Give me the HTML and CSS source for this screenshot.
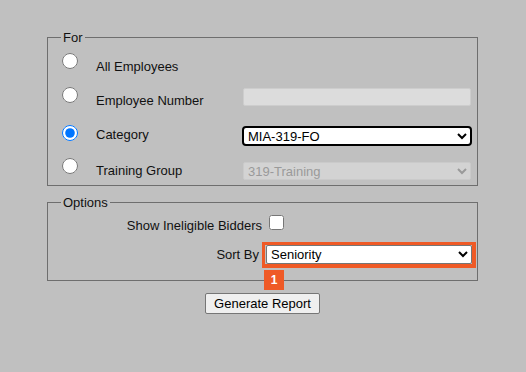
FILE: index.html
```html
<!DOCTYPE html>
<html lang="en">
<head>
    <meta charset="UTF-8">
    <meta name="viewport" content="width=device-width, initial-scale=1.0">
    <title>Bid Report</title>
    <link rel="stylesheet" href="styles.css">
</head>
<body>
    <form class="report">
        <fieldset class="group group-for">
            <legend>For</legend>
            <div class="for-row">
                <input type="radio" name="scope" class="radio">
                <span class="label">All Employees</span>
                <span></span>
            </div>
            <div class="for-row">
                <input type="radio" name="scope" class="radio">
                <span class="label">Employee Number</span>
                <input type="text" class="field" disabled>
            </div>
            <div class="for-row">
                <input type="radio" name="scope" class="radio" checked>
                <span class="label">Category</span>
                <select class="field select-active">
                    <option>MIA-319-FO</option>
                </select>
            </div>
            <div class="for-row">
                <input type="radio" name="scope" class="radio">
                <span class="label">Training Group</span>
                <select class="field" disabled>
                    <option>319-Training</option>
                </select>
            </div>
        </fieldset>

        <fieldset class="group group-options">
            <legend>Options</legend>
            <div class="opt-row">
                <span class="opt-label">Show Ineligible Bidders</span>
                <span class="opt-control"><input type="checkbox" class="check"></span>
            </div>
            <div class="opt-row">
                <span class="opt-label">Sort By</span>
                <span class="opt-control">
                    <span class="callout">
                        <select class="sort-select">
                            <option>Seniority</option>
                        </select>
                        <span class="badge">1</span>
                    </span>
                </span>
            </div>
        </fieldset>

        <div class="actions">
            <button type="button" class="submit">Generate Report</button>
        </div>
    </form>
</body>
</html>
```

FILE: styles.css
```css
body {
    margin: 8px;
    background: #c0c0c0;
    font-family: "Liberation Sans", Arial, sans-serif;
    font-size: 13px;
    color: #111;
}
.report {
    width: 431px;
    margin: 22px 0 0 39px;
}
.group {
    margin: 0;
    border: 1px solid #6e6e6e;
    padding: 4px 5px 0 13px;
}
.group legend {
    padding: 0 2px;
    font-size: 13px;
}
.group-options {
    margin-top: 9px;
    padding: 1px 5px 11px 18px;
}
.group-options legend {
    margin-left: -5px;
}

/* For rows */
.for-row {
    display: grid;
    grid-template-columns: 35px 147px 1fr;
    align-items: center;
    height: 34px;
    box-sizing: border-box;
}
.for-row:nth-child(4) { height: 35px; }
.for-row:nth-child(5) { height: 33px; padding-top: 4px; }
.radio {
    width: 16px;
    height: 16px;
    margin: 0 0 11px 1px;
}
.for-row:nth-child(4) .radio { margin-bottom: 3px; }
.for-row:nth-child(5) .radio { margin-bottom: 9px; }
.field {
    height: 19px;
    box-sizing: border-box;
    width: 228px;
    font-family: "Liberation Sans", Arial, sans-serif;
    font-size: 13px;
    margin: 0;
}
input.field {
    height: 18px;
    margin-bottom: 7px;
    background: #dcdcdc;
    border: 1px solid #cdcdcd;
    border-radius: 2px;
}
select.field:disabled {
    height: 18px;
    background: #dcdcdc;
    border: 1px solid #cfcfcf;
    color: #8a8a8a;
    border-radius: 2px;
}
.select-active {
    height: 20px;
    margin-top: 2px;
    margin-left: -1px;
    width: 230px;
    background: #fff;
    color: #000;
    border: 2px solid #000;
    border-radius: 4px;
    padding-left: 0;
}

/* Options rows */
.opt-row {
    display: grid;
    grid-template-columns: 1fr 1fr;
    align-items: center;
    height: 29px;
}
.opt-label {
    text-align: right;
    padding-right: 7px;
}
.opt-control {
    display: flex;
    align-items: center;
}
.check {
    width: 15px;
    height: 15px;
    margin: 0 0 6px 0;
}
.callout {
    position: relative;
    display: inline-block;
    line-height: 0;
}
.callout::before {
    content: "";
    position: absolute;
    left: -4px;
    right: -4px;
    top: -3px;
    bottom: -4px;
    border: 3px solid #ef5a26;
    border-right-width: 4px;
    border-bottom-width: 4px;
}
.sort-select {
    position: relative;
    width: 206px;
    height: 19px;
    box-sizing: border-box;
    margin: 0;
    font-family: "Liberation Sans", Arial, sans-serif;
    font-size: 13px;
    background: #fff;
    color: #000;
    border: 1px solid #767676;
    border-radius: 2px;
}
.badge {
    position: absolute;
    left: -2px;
    top: 25px;
    width: 20px;
    height: 20px;
    background: #ef5a26;
    color: #fff;
    font-weight: bold;
    font-size: 12px;
    line-height: 20px;
    text-align: center;
}

.actions {
    text-align: center;
    margin-top: 12px;
}
.submit {
    font-family: "Liberation Sans", Arial, sans-serif;
    font-size: 13px;
    height: 21px;
    padding: 0 8px;
    background: #efefef;
    border: 1px solid #767676;
    border-radius: 2px;
    color: #000;
}
```
